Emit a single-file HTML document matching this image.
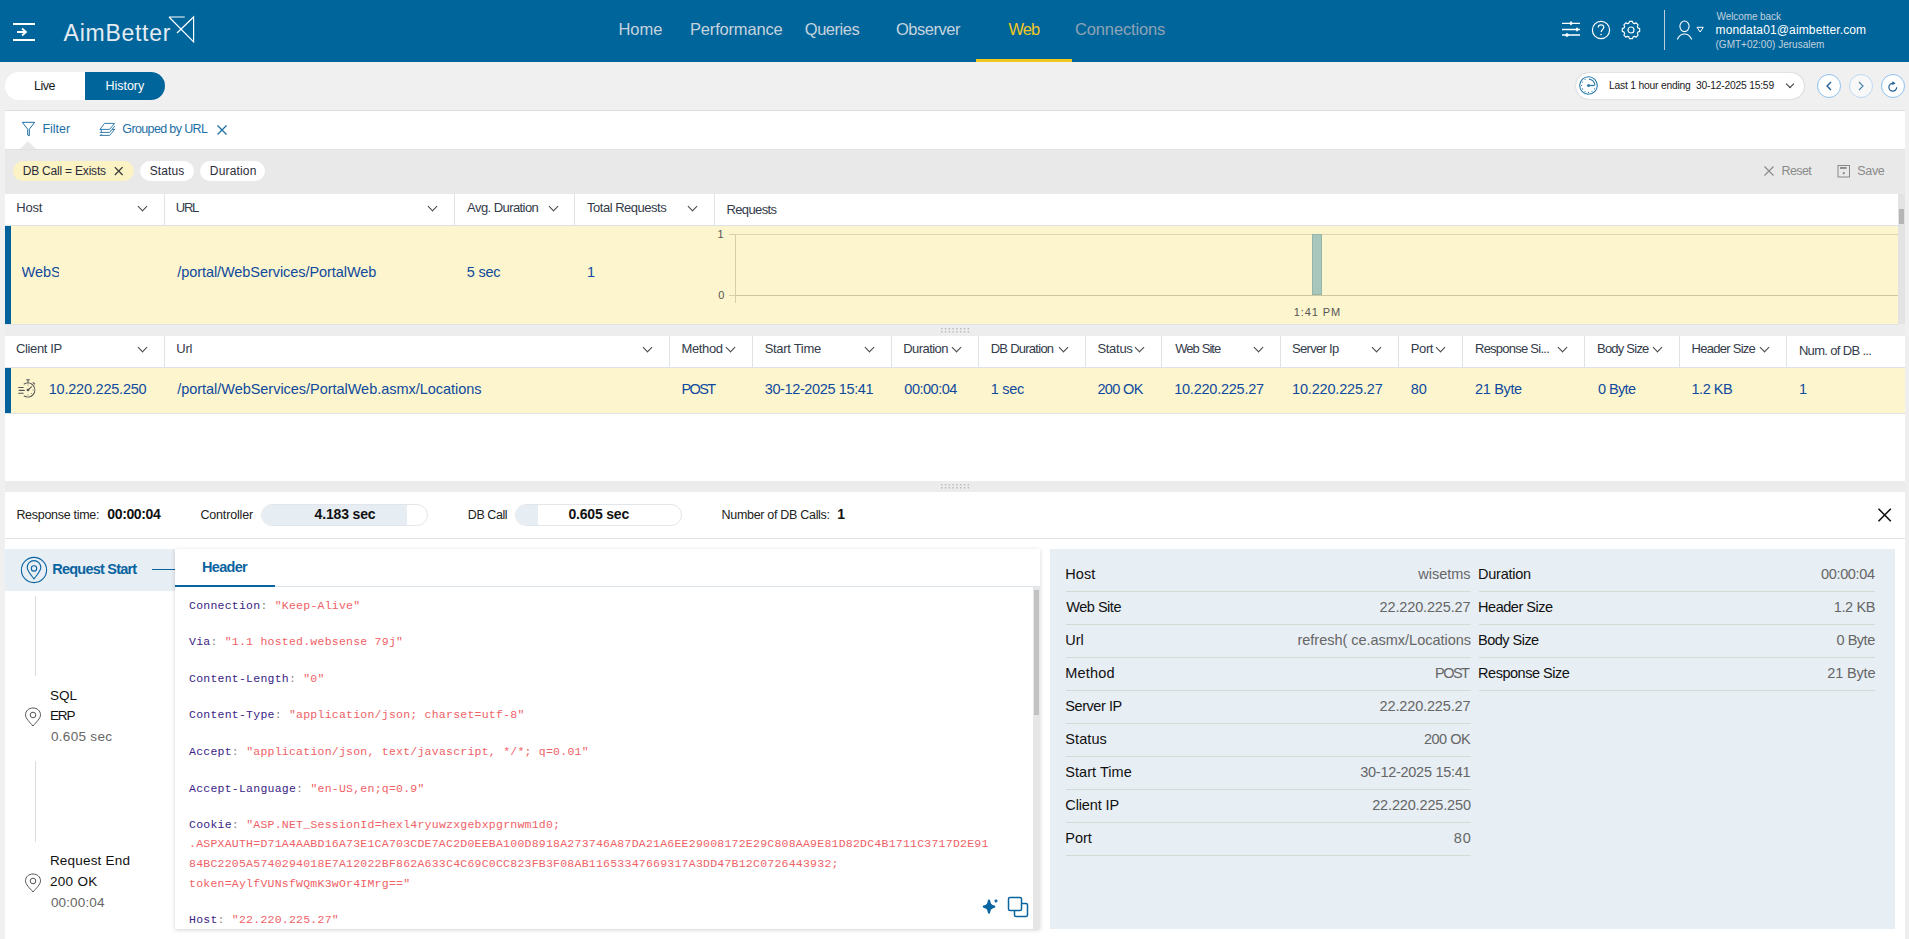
<!DOCTYPE html>
<html><head><meta charset="utf-8">
<style>
*{box-sizing:border-box;margin:0;padding:0}
html,body{width:1909px;height:939px;overflow:hidden}
body{position:relative;background:#f0f0f0;font-family:"Liberation Sans",sans-serif;color:#333}
.a{position:absolute;white-space:pre}
.chev{position:absolute;width:7px;height:7px;border-right:1.3px solid #444;border-bottom:1.3px solid #444;transform:rotate(45deg)}
.vd{position:absolute;width:1px;background:#dfe3e8}
</style></head><body>
<div class="a" style="left:0;top:0;width:1909px;height:62px;background:#00659b"></div>
<div class="a" style="left:13px;top:23px;width:22px;height:2px;background:#fff"></div>
<div class="a" style="left:13px;top:39px;width:22px;height:2px;background:#fff"></div>
<svg class="a" style="left:16px;top:27px" width="12" height="10" viewBox="0 0 12 10"><path d="M1 5H10M6 1.5L10 5L6 8.5" stroke="#fff" stroke-width="1.8" fill="none"/></svg>
<div class="a" style="left:63.60px;top:18.80px;font-family:'Liberation Sans',sans-serif;font-size:23px;color:#e4ecf2;font-weight:normal;line-height:29px;;letter-spacing:0.726px;">AimBetter</div>
<svg class="a" style="left:168px;top:15px" width="28" height="28" viewBox="0 0 28 28"><path d="M1 2H16.8M1 2L25.6 26.8V2L9 18" stroke="#fff" stroke-width="1.2" fill="none"/></svg>
<div class="a" style="left:618.40px;top:19.10px;font-family:'Liberation Sans',sans-serif;font-size:16.5px;color:#c6d3dd;font-weight:normal;line-height:21px;;letter-spacing:0.0px;">Home</div>
<div class="a" style="left:690.00px;top:19.10px;font-family:'Liberation Sans',sans-serif;font-size:16.5px;color:#c6d3dd;font-weight:normal;line-height:21px;;letter-spacing:-0.18px;">Performance</div>
<div class="a" style="left:804.80px;top:19.10px;font-family:'Liberation Sans',sans-serif;font-size:16.5px;color:#c6d3dd;font-weight:normal;line-height:21px;;letter-spacing:-0.467px;">Queries</div>
<div class="a" style="left:895.90px;top:19.10px;font-family:'Liberation Sans',sans-serif;font-size:16.5px;color:#c6d3dd;font-weight:normal;line-height:21px;;letter-spacing:-0.457px;">Observer</div>
<div class="a" style="left:1008.50px;top:19.10px;font-family:'Liberation Sans',sans-serif;font-size:16.5px;color:#f2c81e;font-weight:normal;line-height:21px;;letter-spacing:-1.0px;">Web</div>
<div class="a" style="left:1075.00px;top:19.10px;font-family:'Liberation Sans',sans-serif;font-size:16.5px;color:#8ea3b4;font-weight:normal;line-height:21px;;letter-spacing:-0.14px;">Connections</div>
<div class="a" style="left:976px;top:59px;width:96px;height:3px;background:#f2c81e"></div>
<svg class="a" style="left:1560px;top:18px" width="24" height="22" viewBox="0 0 24 22"><g stroke="#fff" stroke-width="1.3" fill="#fff"><path d="M2 5.3H20M2 11.5H20M2 17H20"/><path d="M11 3.5L12.3 5.3L11 7.1L9.7 5.3Z" stroke-width="0.8"/><path d="M17 9.7L18.3 11.5L17 13.3L15.7 11.5Z" stroke-width="0.8"/><circle cx="7" cy="17" r="1.5" stroke-width="0.6"/></g></svg>
<svg class="a" style="left:1590px;top:19px" width="22" height="22" viewBox="0 0 22 22"><circle cx="11" cy="11" r="8.6" stroke="#fff" stroke-width="1.2" fill="none"/><path d="M8.2 8.6C8.2 6.8 9.5 5.8 11 5.8C12.6 5.8 13.8 6.9 13.8 8.3C13.8 10.2 11.2 10.6 11.2 13" stroke="#fff" stroke-width="1.2" fill="none"/><circle cx="11.1" cy="15.6" r="0.8" fill="#fff"/></svg>
<svg class="a" style="left:1620px;top:19px" width="22" height="22" viewBox="0 0 22 22"><path d="M8.89 4.11L9.62 2.31L12.38 2.31L13.11 4.11L14.38 4.64L16.17 3.88L18.12 5.83L17.36 7.62L17.89 8.89L19.69 9.62L19.69 12.38L17.89 13.11L17.36 14.38L18.12 16.17L16.17 18.12L14.38 17.36L13.11 17.89L12.38 19.69L9.62 19.69L8.89 17.89L7.62 17.36L5.83 18.12L3.88 16.17L4.64 14.38L4.11 13.11L2.31 12.38L2.31 9.62L4.11 8.89L4.64 7.62L3.88 5.83L5.83 3.88L7.62 4.64Z" stroke="#fff" stroke-width="1.15" fill="none" stroke-linejoin="round"/><circle cx="11" cy="11" r="3" stroke="#fff" stroke-width="1.2" fill="none"/></svg>
<div class="a" style="left:1664px;top:10px;width:1px;height:40px;background:#b9cfdd"></div>
<svg class="a" style="left:1675px;top:19px" width="32" height="22" viewBox="0 0 32 22"><ellipse cx="9.5" cy="7.3" rx="4.6" ry="5.3" stroke="#fff" stroke-width="1.1" fill="none"/><path d="M2.3 20.5C4 16.5 6.5 15 9.5 15C12.5 15 15 16.5 16.7 20.5" stroke="#fff" stroke-width="1.1" fill="none"/><path d="M22 8.3H28.3L25.15 13Z" stroke="#fff" stroke-width="1" fill="none"/></svg>
<div class="a" style="left:1716.50px;top:10.55px;font-family:'Liberation Sans',sans-serif;font-size:10px;color:#c2d2de;font-weight:normal;line-height:12px;;letter-spacing:-0.09px;">Welcome back</div>
<div class="a" style="left:1715.50px;top:22.75px;font-family:'Liberation Sans',sans-serif;font-size:12px;color:#ffffff;font-weight:normal;line-height:15px;;letter-spacing:0.137px;">mondata01@aimbetter.com</div>
<div class="a" style="left:1715.50px;top:38.70px;font-family:'Liberation Sans',sans-serif;font-size:10px;color:#c2d2de;font-weight:normal;line-height:12px;;letter-spacing:0.01px;">(GMT+02:00) Jerusalem</div>
<div class="a" style="left:5px;top:72px;width:160px;height:28px;border-radius:14px;background:#fff;overflow:hidden"><div class="a" style="left:80px;top:0;width:80px;height:28px;background:#00659b"></div></div>
<div class="a" style="left:34.00px;top:78.00px;font-family:'Liberation Sans',sans-serif;font-size:12.5px;color:#1a1a1a;font-weight:normal;line-height:16px;;letter-spacing:-0.467px;">Live</div>
<div class="a" style="left:105.50px;top:77.95px;font-family:'Liberation Sans',sans-serif;font-size:12.5px;color:#ffffff;font-weight:normal;line-height:16px;;letter-spacing:-0.033px;">History</div>
<div class="a" style="left:1576px;top:73px;width:228px;height:26px;border-radius:13px;background:#fff;box-shadow:0 0 1.5px #aaa"></div>
<svg class="a" style="left:1578.3px;top:75.3px" width="21" height="21" viewBox="0 0 21 21"><g stroke="#2a7aab" fill="none"><circle cx="10.5" cy="10.5" r="8.8" stroke-width="1.1"/><path d="M10.5 10.5H16.6" stroke-width="1.3"/><path d="M11 4.1A6.4 6.4 0 0 1 16.9 10.3" stroke-width="1.1"/></g><g fill="#2a7aab"><circle cx="10.5" cy="10.5" r="1.5"/><circle cx="7.05" cy="4.52" r="0.6"/><circle cx="4.52" cy="7.05" r="0.6"/><circle cx="3.60" cy="10.50" r="0.6"/><circle cx="4.52" cy="13.95" r="0.6"/><circle cx="7.05" cy="16.48" r="0.6"/><circle cx="10.50" cy="17.40" r="0.6"/><circle cx="13.95" cy="16.48" r="0.6"/><circle cx="16.48" cy="13.95" r="0.6"/></g></svg>
<div class="a" style="left:1609.00px;top:79.45px;font-family:'Liberation Sans',sans-serif;font-size:10.3px;color:#1a1a1a;font-weight:normal;line-height:13px;;letter-spacing:-0.206px;">Last 1 hour ending  30-12-2025 15:59</div>
<div class="chev" style="left:1787px;top:81px;width:6px;height:6px;border-color:#333"></div>
<div class="a" style="left:1817px;top:74px;width:24px;height:24px;border-radius:12px;border:1px solid #8cc0ef;background:#fff"></div>
<div class="a" style="left:1849px;top:74px;width:24px;height:24px;border-radius:12px;border:1px solid #bcd8f3;background:#f8f8f8"></div>
<div class="a" style="left:1881px;top:74px;width:24px;height:24px;border-radius:12px;border:1px solid #8cc0ef;background:#fff"></div>
<svg class="a" style="left:1817px;top:74px" width="88" height="24" viewBox="0 0 88 24"><path d="M14 8L10 12L14 16" stroke="#1f5f95" stroke-width="1.4" fill="none"/><path d="M42 8L46 12L42 16" stroke="#4f86ab" stroke-width="1.2" fill="none"/><path d="M75.8 9.3A3.9 3.9 0 1 0 79.7 13.2" stroke="#1f6095" stroke-width="1.2" fill="none"/><path d="M75.3 7.3L78.6 9.3L75.3 11.3Z" fill="#1f6095"/></svg>
<div class="a" style="left:5px;top:110px;width:1900px;height:1px;background:#dcdcdc"></div>
<div class="a" style="left:5px;top:111px;width:1900px;height:38px;background:#fff"></div>
<svg class="a" style="left:21px;top:121px" width="15" height="16" viewBox="0 0 15 16"><path d="M1.3 1.3H13.7L8.3 8.2V14.8L6.7 14V8.2Z" stroke="#1e6fa5" stroke-width="1" fill="none" stroke-linejoin="round"/></svg>
<div class="a" style="left:42.50px;top:121.25px;font-family:'Liberation Sans',sans-serif;font-size:12.5px;color:#1e6fa5;font-weight:normal;line-height:16px;;letter-spacing:-0.04px;">Filter</div>
<svg class="a" style="left:96px;top:119px" width="24" height="20" viewBox="0 0 24 20"><g stroke="#1e6fa5" stroke-width="0.9" fill="none" stroke-linejoin="round" stroke-linecap="round"><path d="M8.9 4.4H18.5L13.6 10.4H4.3Z"/><path d="M5.3 10.4V13.4M4.3 13.4H13.6L18.5 7.5M16.4 10.4H18.6M4.3 16.4H13.6L18.5 10.6M4.3 16.4L5.5 15.2"/></g></svg>
<div class="a" style="left:122.30px;top:121.45px;font-family:'Liberation Sans',sans-serif;font-size:12.5px;color:#1e6fa5;font-weight:normal;line-height:16px;;letter-spacing:-0.631px;">Grouped by URL</div>
<svg class="a" style="left:216px;top:124px" width="12" height="12" viewBox="0 0 12 12"><path d="M1.5 1.5L10.5 10.5M10.5 1.5L1.5 10.5" stroke="#1e6fa5" stroke-width="1.3"/></svg>
<div class="a" style="left:5px;top:149px;width:1900px;height:45px;background:#e9e9e9"></div>
<div class="a" style="left:5px;top:149px;width:1900px;height:1px;background:#e0e0e0"></div>
<svg class="a" style="left:20px;top:141px" width="16" height="8" viewBox="0 0 16 8"><path d="M0 8L8 0L16 8Z" fill="#e9e9e9"/></svg>
<div class="a" style="left:13px;top:161px;width:121px;height:20px;border-radius:10px;background:#fbf3c3"></div>
<div class="a" style="left:22.70px;top:164.05px;font-family:'Liberation Sans',sans-serif;font-size:12px;color:#2b2b3b;font-weight:normal;line-height:15px;;letter-spacing:-0.2px;">DB Call = Exists</div>
<svg class="a" style="left:113px;top:166px" width="11" height="10" viewBox="0 0 11 10"><path d="M1.8 1.2L9.6 9M9.6 1.2L1.8 9" stroke="#333" stroke-width="1.2"/></svg>
<div class="a" style="left:140px;top:161px;width:54px;height:20px;border-radius:10px;background:#fff"></div>
<div class="a" style="left:149.70px;top:164.05px;font-family:'Liberation Sans',sans-serif;font-size:12px;color:#2b2b3b;font-weight:normal;line-height:15px;;letter-spacing:0.12px;">Status</div>
<div class="a" style="left:200px;top:161px;width:65px;height:20px;border-radius:10px;background:#fff"></div>
<div class="a" style="left:209.80px;top:164.05px;font-family:'Liberation Sans',sans-serif;font-size:12px;color:#2b2b3b;font-weight:normal;line-height:15px;;letter-spacing:0.172px;">Duration</div>
<svg class="a" style="left:1763px;top:165px" width="12" height="12" viewBox="0 0 12 12"><path d="M1.5 1.5L10.5 10.5M10.5 1.5L1.5 10.5" stroke="#888" stroke-width="1.1"/></svg>
<div class="a" style="left:1781.50px;top:163.00px;font-family:'Liberation Sans',sans-serif;font-size:12.5px;color:#8a8a8a;font-weight:normal;line-height:16px;;letter-spacing:-0.6px;">Reset</div>
<svg class="a" style="left:1837px;top:164px" width="14" height="14" viewBox="0 0 14 14"><rect x="1" y="1.5" width="11.5" height="11.5" stroke="#888" stroke-width="1" fill="none"/><rect x="3" y="3" width="6.6" height="1.9" fill="#888"/><circle cx="6.8" cy="9.2" r="1.1" fill="#888"/></svg>
<div class="a" style="left:1857.30px;top:163.00px;font-family:'Liberation Sans',sans-serif;font-size:12.5px;color:#8a8a8a;font-weight:normal;line-height:16px;;letter-spacing:-0.333px;">Save</div>
<div class="a" style="left:5px;top:194px;width:1893px;height:31px;background:#fff"></div>
<div class="a" style="left:5px;top:225px;width:1893px;height:1px;background:#dde2e8"></div>
<div class="a" style="left:1898px;top:194px;width:7px;height:130px;background:#e3e3e3"></div>
<div class="a" style="left:1899px;top:209px;width:5px;height:15px;background:#b5b5b5"></div>
<div class="vd" style="left:164px;top:194px;height:31px"></div>
<div class="vd" style="left:454px;top:194px;height:31px"></div>
<div class="vd" style="left:574px;top:194px;height:31px"></div>
<div class="vd" style="left:714px;top:194px;height:31px"></div>
<div class="a" style="left:16.30px;top:200.10px;font-family:'Liberation Sans',sans-serif;font-size:13px;color:#343b4a;font-weight:normal;line-height:16px;;letter-spacing:-0.2px;">Host</div>
<div class="chev" style="left:139px;top:203px"></div>
<div class="a" style="left:175.80px;top:200.10px;font-family:'Liberation Sans',sans-serif;font-size:13px;color:#343b4a;font-weight:normal;line-height:16px;;letter-spacing:-1.3px;">URL</div>
<div class="chev" style="left:429px;top:203px"></div>
<div class="a" style="left:467.10px;top:200.15px;font-family:'Liberation Sans',sans-serif;font-size:13px;color:#343b4a;font-weight:normal;line-height:16px;;letter-spacing:-0.567px;">Avg. Duration</div>
<div class="chev" style="left:550px;top:203px"></div>
<div class="a" style="left:587.10px;top:200.15px;font-family:'Liberation Sans',sans-serif;font-size:13px;color:#343b4a;font-weight:normal;line-height:16px;;letter-spacing:-0.492px;">Total Requests</div>
<div class="chev" style="left:689px;top:203px"></div>
<div class="a" style="left:726.50px;top:201.75px;font-family:'Liberation Sans',sans-serif;font-size:13px;color:#343b4a;font-weight:normal;line-height:16px;;letter-spacing:-0.628px;">Requests</div>
<div class="a" style="left:5px;top:226px;width:1893px;height:98px;background:#fdf5cd"></div>
<div class="a" style="left:5px;top:226px;width:6px;height:98px;background:#00609a"></div>
<div class="a" style="left:21.50px;top:263.40px;font-family:'Liberation Sans',sans-serif;font-size:14.5px;color:#0f4a9e;font-weight:normal;line-height:18px;;letter-spacing:0.0px;width:37px;overflow:hidden;">WebServices</div>
<div class="a" style="left:177.20px;top:263.40px;font-family:'Liberation Sans',sans-serif;font-size:14.5px;color:#0f4a9e;font-weight:normal;line-height:18px;;letter-spacing:-0.065px;">/portal/WebServices/PortalWeb</div>
<div class="a" style="left:466.70px;top:263.40px;font-family:'Liberation Sans',sans-serif;font-size:14.5px;color:#0f4a9e;font-weight:normal;line-height:18px;;letter-spacing:-0.2px;">5 sec</div>
<div class="a" style="left:586.90px;top:263.40px;font-family:'Liberation Sans',sans-serif;font-size:14.5px;color:#0f4a9e;font-weight:normal;line-height:18px;;letter-spacing:0.0px;">1</div>
<div class="a" style="left:735px;top:234px;width:1163px;height:1px;background:#ddd5b0"></div>
<div class="a" style="left:735px;top:295px;width:1163px;height:1px;background:#cfc7a0"></div>
<div class="a" style="left:735px;top:234px;width:1px;height:69px;background:#d6cfa8"></div>
<div class="a" style="left:729px;top:234px;width:6px;height:1px;background:#d6cfa8"></div>
<div class="a" style="left:729px;top:295px;width:6px;height:1px;background:#d6cfa8"></div>
<div class="a" style="left:717.60px;top:227.00px;font-family:'Liberation Sans',sans-serif;font-size:11px;color:#555;font-weight:normal;line-height:14px;;letter-spacing:0.0px;">1</div>
<div class="a" style="left:718.30px;top:287.75px;font-family:'Liberation Sans',sans-serif;font-size:11px;color:#555;font-weight:normal;line-height:14px;;letter-spacing:0.0px;">0</div>
<div class="a" style="left:1312px;top:234px;width:10px;height:61px;background:#a9c6bd;border:1px solid #93b6aa"></div>
<div class="a" style="left:1293.80px;top:304.90px;font-family:'Liberation Sans',sans-serif;font-size:11px;color:#555;font-weight:normal;line-height:14px;;letter-spacing:0.9px;">1:41 PM</div>
<div class="a" style="left:5px;top:324px;width:1900px;height:12px;background:#ededed"></div>
<div class="a" style="left:5px;top:324px;width:1893px;height:1px;background:#dde2e8"></div>
<svg class="a" style="left:940px;top:327px" width="31" height="7" viewBox="0 0 31 7"><g fill="#bcbcbc"><rect x="1.0" y="1" width="1.5" height="1.5"/><rect x="1.0" y="4" width="1.5" height="1.5"/><rect x="4.8" y="1" width="1.5" height="1.5"/><rect x="4.8" y="4" width="1.5" height="1.5"/><rect x="8.6" y="1" width="1.5" height="1.5"/><rect x="8.6" y="4" width="1.5" height="1.5"/><rect x="12.4" y="1" width="1.5" height="1.5"/><rect x="12.4" y="4" width="1.5" height="1.5"/><rect x="16.2" y="1" width="1.5" height="1.5"/><rect x="16.2" y="4" width="1.5" height="1.5"/><rect x="20.0" y="1" width="1.5" height="1.5"/><rect x="20.0" y="4" width="1.5" height="1.5"/><rect x="23.8" y="1" width="1.5" height="1.5"/><rect x="23.8" y="4" width="1.5" height="1.5"/><rect x="27.6" y="1" width="1.5" height="1.5"/><rect x="27.6" y="4" width="1.5" height="1.5"/></g></svg>
<div class="a" style="left:5px;top:336px;width:1900px;height:145px;background:#fff"></div>
<div class="a" style="left:5px;top:367px;width:1900px;height:1px;background:#dde2e8"></div>
<div class="vd" style="left:164px;top:336px;height:31px"></div>
<div class="vd" style="left:669px;top:336px;height:31px"></div>
<div class="vd" style="left:752px;top:336px;height:31px"></div>
<div class="vd" style="left:891px;top:336px;height:31px"></div>
<div class="vd" style="left:978px;top:336px;height:31px"></div>
<div class="vd" style="left:1085px;top:336px;height:31px"></div>
<div class="vd" style="left:1161px;top:336px;height:31px"></div>
<div class="vd" style="left:1280px;top:336px;height:31px"></div>
<div class="vd" style="left:1398px;top:336px;height:31px"></div>
<div class="vd" style="left:1462px;top:336px;height:31px"></div>
<div class="vd" style="left:1584px;top:336px;height:31px"></div>
<div class="vd" style="left:1679px;top:336px;height:31px"></div>
<div class="vd" style="left:1786px;top:336px;height:31px"></div>
<div class="a" style="left:16.00px;top:341.15px;font-family:'Liberation Sans',sans-serif;font-size:13px;color:#343b4a;font-weight:normal;line-height:16px;;letter-spacing:-0.376px;">Client IP</div>
<div class="chev" style="left:139px;top:344px"></div>
<div class="a" style="left:176.20px;top:341.15px;font-family:'Liberation Sans',sans-serif;font-size:13px;color:#343b4a;font-weight:normal;line-height:16px;;letter-spacing:-0.2px;">Url</div>
<div class="chev" style="left:644px;top:344px"></div>
<div class="a" style="left:681.50px;top:341.15px;font-family:'Liberation Sans',sans-serif;font-size:13px;color:#343b4a;font-weight:normal;line-height:16px;;letter-spacing:-0.36px;">Method</div>
<div class="chev" style="left:727px;top:344px"></div>
<div class="a" style="left:764.70px;top:341.15px;font-family:'Liberation Sans',sans-serif;font-size:13px;color:#343b4a;font-weight:normal;line-height:16px;;letter-spacing:-0.311px;">Start Time</div>
<div class="chev" style="left:866px;top:344px"></div>
<div class="a" style="left:903.30px;top:341.15px;font-family:'Liberation Sans',sans-serif;font-size:13px;color:#343b4a;font-weight:normal;line-height:16px;;letter-spacing:-0.571px;">Duration</div>
<div class="chev" style="left:953px;top:344px"></div>
<div class="a" style="left:990.70px;top:341.15px;font-family:'Liberation Sans',sans-serif;font-size:13px;color:#343b4a;font-weight:normal;line-height:16px;;letter-spacing:-0.74px;">DB Duration</div>
<div class="chev" style="left:1060px;top:344px"></div>
<div class="a" style="left:1097.40px;top:341.15px;font-family:'Liberation Sans',sans-serif;font-size:13px;color:#343b4a;font-weight:normal;line-height:16px;;letter-spacing:-0.28px;">Status</div>
<div class="chev" style="left:1136px;top:344px"></div>
<div class="a" style="left:1175.20px;top:341.15px;font-family:'Liberation Sans',sans-serif;font-size:13px;color:#343b4a;font-weight:normal;line-height:16px;;letter-spacing:-0.915px;">Web Site</div>
<div class="chev" style="left:1255px;top:344px"></div>
<div class="a" style="left:1292.00px;top:341.15px;font-family:'Liberation Sans',sans-serif;font-size:13px;color:#343b4a;font-weight:normal;line-height:16px;;letter-spacing:-0.7px;">Server Ip</div>
<div class="chev" style="left:1373px;top:344px"></div>
<div class="a" style="left:1410.80px;top:341.15px;font-family:'Liberation Sans',sans-serif;font-size:13px;color:#343b4a;font-weight:normal;line-height:16px;;letter-spacing:-0.4px;">Port</div>
<div class="chev" style="left:1437px;top:344px"></div>
<div class="a" style="left:1475.00px;top:341.15px;font-family:'Liberation Sans',sans-serif;font-size:13px;color:#343b4a;font-weight:normal;line-height:16px;;letter-spacing:-0.754px;">Response Si...</div>
<div class="chev" style="left:1559px;top:344px"></div>
<div class="a" style="left:1597.00px;top:341.15px;font-family:'Liberation Sans',sans-serif;font-size:13px;color:#343b4a;font-weight:normal;line-height:16px;;letter-spacing:-0.775px;">Body Size</div>
<div class="chev" style="left:1654px;top:344px"></div>
<div class="a" style="left:1691.50px;top:341.15px;font-family:'Liberation Sans',sans-serif;font-size:13px;color:#343b4a;font-weight:normal;line-height:16px;;letter-spacing:-0.72px;">Header Size</div>
<div class="chev" style="left:1761px;top:344px"></div>
<div class="a" style="left:1798.90px;top:343.15px;font-family:'Liberation Sans',sans-serif;font-size:13px;color:#343b4a;font-weight:normal;line-height:16px;;letter-spacing:-0.661px;">Num. of DB ...</div>
<div class="a" style="left:5px;top:368px;width:1900px;height:45px;background:#fdf5cd"></div>
<div class="a" style="left:5px;top:413px;width:1900px;height:1px;background:#dde2e8"></div>
<div class="a" style="left:5px;top:368px;width:6px;height:45px;background:#00609a"></div>
<svg class="a" style="left:17px;top:378px" width="20" height="20" viewBox="0 0 20 20"><g stroke="#555" stroke-width="1.1" fill="none" stroke-linecap="round"><path d="M7.2 6A7 7 0 1 1 7.2 18"/><path d="M1.6 9.5H6.2M2.2 12.4H7.2M1.6 15.2H6.2M9.6 1.8H12.4M11 2V4.8M16.2 4.6L17.6 6M11 12L14.4 8.8"/></g><circle cx="11" cy="12" r="1.3" fill="#555"/><g fill="#777"><circle cx="11" cy="7" r="0.6"/><circle cx="16" cy="12" r="0.6"/><circle cx="11" cy="17" r="0.6"/><circle cx="14.5" cy="15.5" r="0.5"/></g></svg>
<div class="a" style="left:48.70px;top:379.95px;font-family:'Liberation Sans',sans-serif;font-size:14.5px;color:#0f4a9e;font-weight:normal;line-height:18px;;letter-spacing:-0.216px;">10.220.225.250</div>
<div class="a" style="left:177.20px;top:379.95px;font-family:'Liberation Sans',sans-serif;font-size:14.5px;color:#0f4a9e;font-weight:normal;line-height:18px;;letter-spacing:-0.033px;">/portal/WebServices/PortalWeb.asmx/Locations</div>
<div class="a" style="left:681.50px;top:379.95px;font-family:'Liberation Sans',sans-serif;font-size:14.5px;color:#0f4a9e;font-weight:normal;line-height:18px;;letter-spacing:-1.6px;">POST</div>
<div class="a" style="left:764.70px;top:379.95px;font-family:'Liberation Sans',sans-serif;font-size:14.5px;color:#0f4a9e;font-weight:normal;line-height:18px;;letter-spacing:-0.374px;">30-12-2025 15:41</div>
<div class="a" style="left:904.30px;top:379.95px;font-family:'Liberation Sans',sans-serif;font-size:14.5px;color:#0f4a9e;font-weight:normal;line-height:18px;;letter-spacing:-0.486px;">00:00:04</div>
<div class="a" style="left:990.70px;top:379.95px;font-family:'Liberation Sans',sans-serif;font-size:14.5px;color:#0f4a9e;font-weight:normal;line-height:18px;;letter-spacing:-0.25px;">1 sec</div>
<div class="a" style="left:1097.40px;top:379.95px;font-family:'Liberation Sans',sans-serif;font-size:14.5px;color:#0f4a9e;font-weight:normal;line-height:18px;;letter-spacing:-0.64px;">200 OK</div>
<div class="a" style="left:1174.20px;top:379.95px;font-family:'Liberation Sans',sans-serif;font-size:14.5px;color:#0f4a9e;font-weight:normal;line-height:18px;;letter-spacing:-0.233px;">10.220.225.27</div>
<div class="a" style="left:1292.00px;top:379.95px;font-family:'Liberation Sans',sans-serif;font-size:14.5px;color:#0f4a9e;font-weight:normal;line-height:18px;;letter-spacing:-0.167px;">10.220.225.27</div>
<div class="a" style="left:1410.80px;top:379.95px;font-family:'Liberation Sans',sans-serif;font-size:14.5px;color:#0f4a9e;font-weight:normal;line-height:18px;;letter-spacing:0.0px;">80</div>
<div class="a" style="left:1475.00px;top:379.95px;font-family:'Liberation Sans',sans-serif;font-size:14.5px;color:#0f4a9e;font-weight:normal;line-height:18px;;letter-spacing:-0.334px;">21 Byte</div>
<div class="a" style="left:1598.00px;top:379.95px;font-family:'Liberation Sans',sans-serif;font-size:14.5px;color:#0f4a9e;font-weight:normal;line-height:18px;;letter-spacing:-0.6px;">0 Byte</div>
<div class="a" style="left:1691.50px;top:379.95px;font-family:'Liberation Sans',sans-serif;font-size:14.5px;color:#0f4a9e;font-weight:normal;line-height:18px;;letter-spacing:-0.48px;">1.2 KB</div>
<div class="a" style="left:1798.90px;top:379.95px;font-family:'Liberation Sans',sans-serif;font-size:14.5px;color:#0f4a9e;font-weight:normal;line-height:18px;;letter-spacing:0.0px;">1</div>
<div class="a" style="left:5px;top:481px;width:1900px;height:11px;background:#ececec"></div>
<svg class="a" style="left:940px;top:483px" width="31" height="7" viewBox="0 0 31 7"><g fill="#bcbcbc"><rect x="1.0" y="1" width="1.5" height="1.5"/><rect x="1.0" y="4" width="1.5" height="1.5"/><rect x="4.8" y="1" width="1.5" height="1.5"/><rect x="4.8" y="4" width="1.5" height="1.5"/><rect x="8.6" y="1" width="1.5" height="1.5"/><rect x="8.6" y="4" width="1.5" height="1.5"/><rect x="12.4" y="1" width="1.5" height="1.5"/><rect x="12.4" y="4" width="1.5" height="1.5"/><rect x="16.2" y="1" width="1.5" height="1.5"/><rect x="16.2" y="4" width="1.5" height="1.5"/><rect x="20.0" y="1" width="1.5" height="1.5"/><rect x="20.0" y="4" width="1.5" height="1.5"/><rect x="23.8" y="1" width="1.5" height="1.5"/><rect x="23.8" y="4" width="1.5" height="1.5"/><rect x="27.6" y="1" width="1.5" height="1.5"/><rect x="27.6" y="4" width="1.5" height="1.5"/></g></svg>
<div class="a" style="left:5px;top:492px;width:1900px;height:447px;background:#fff"></div>
<div class="a" style="left:1905px;top:336px;width:4px;height:603px;background:#eeeeee"></div>
<div class="a" style="left:16.40px;top:507.10px;font-family:'Liberation Sans',sans-serif;font-size:12.5px;color:#222;font-weight:normal;line-height:16px;;letter-spacing:-0.293px;">Response time:</div>
<div class="a" style="left:107.30px;top:505.10px;font-family:'Liberation Sans',sans-serif;font-size:14px;color:#111;font-weight:bold;line-height:18px;;letter-spacing:-0.371px;">00:00:04</div>
<div class="a" style="left:200.40px;top:507.10px;font-family:'Liberation Sans',sans-serif;font-size:12.5px;color:#222;font-weight:normal;line-height:16px;;letter-spacing:-0.155px;">Controller</div>
<div class="a" style="left:261px;top:504px;width:167px;height:22px;border-radius:11px;border:1px solid #e2e6ea;background:#fff;overflow:hidden"><div class="a" style="left:0;top:0;width:145px;height:22px;background:#e6edf3"></div></div>
<div class="a" style="left:314.50px;top:505.10px;font-family:'Liberation Sans',sans-serif;font-size:14px;color:#111;font-weight:bold;line-height:18px;;letter-spacing:-0.15px;">4.183 sec</div>
<div class="a" style="left:467.80px;top:507.30px;font-family:'Liberation Sans',sans-serif;font-size:12.5px;color:#222;font-weight:normal;line-height:16px;;letter-spacing:-0.433px;">DB Call</div>
<div class="a" style="left:515px;top:504px;width:167px;height:22px;border-radius:11px;border:1px solid #e2e6ea;background:#fff;overflow:hidden"><div class="a" style="left:0;top:0;width:22px;height:22px;background:#e6edf3"></div></div>
<div class="a" style="left:568.50px;top:505.10px;font-family:'Liberation Sans',sans-serif;font-size:14px;color:#111;font-weight:bold;line-height:18px;;letter-spacing:-0.2px;">0.605 sec</div>
<div class="a" style="left:721.50px;top:507.30px;font-family:'Liberation Sans',sans-serif;font-size:12.5px;color:#222;font-weight:normal;line-height:16px;;letter-spacing:-0.3px;">Number of DB Calls:</div>
<div class="a" style="left:837.20px;top:505.30px;font-family:'Liberation Sans',sans-serif;font-size:14px;color:#111;font-weight:bold;line-height:18px;;letter-spacing:0.0px;">1</div>
<svg class="a" style="left:1876px;top:507px" width="17" height="16" viewBox="0 0 17 16"><path d="M2.5 1.8L14.8 14.2M14.8 1.8L2.5 14.2" stroke="#111" stroke-width="1.6"/></svg>
<div class="a" style="left:5px;top:538px;width:1900px;height:1px;background:#e2e2e2"></div>
<div class="a" style="left:5px;top:549px;width:170px;height:42px;background:#e7eef4"></div>
<svg class="a" style="left:20px;top:556px" width="28" height="28" viewBox="0 0 28 28"><circle cx="14" cy="14" r="12.6" stroke="#0a64a0" stroke-width="1.1" fill="none"/><path d="M14 22.8C11 19 7.2 15.2 7.2 11.6C7.2 7.8 10.2 4.6 14 4.6C17.8 4.6 20.8 7.8 20.8 11.6C20.8 15.2 17 19 14 22.8Z" stroke="#0a64a0" stroke-width="1.1" fill="none"/><circle cx="14" cy="12.4" r="2.7" stroke="#0a64a0" stroke-width="1.1" fill="none"/></svg>
<div class="a" style="left:52.30px;top:559.95px;font-family:'Liberation Sans',sans-serif;font-size:14.5px;color:#0a64a0;font-weight:bold;line-height:18px;;letter-spacing:-0.783px;">Request Start</div>
<div class="a" style="left:152px;top:569px;width:23px;height:1px;background:#0a64a0"></div>
<div class="a" style="left:35px;top:596px;width:1px;height:80px;background:#dcdcdc"></div>
<div class="a" style="left:35px;top:761px;width:1px;height:81px;background:#dcdcdc"></div>
<svg class="a" style="left:24px;top:707px" width="18" height="20" viewBox="0 0 18 20"><path d="M9 19C6 15.5 1.5 11.5 1.5 7.8C1.5 3.8 4.8 1 9 1C13.2 1 16.5 3.8 16.5 7.8C16.5 11.5 12 15.5 9 19Z" stroke="#555" stroke-width="1" fill="none"/><circle cx="9" cy="8" r="2.8" stroke="#555" stroke-width="1" fill="none"/></svg>
<svg class="a" style="left:24px;top:873px" width="18" height="20" viewBox="0 0 18 20"><path d="M9 19C6 15.5 1.5 11.5 1.5 7.8C1.5 3.8 4.8 1 9 1C13.2 1 16.5 3.8 16.5 7.8C16.5 11.5 12 15.5 9 19Z" stroke="#555" stroke-width="1" fill="none"/><circle cx="9" cy="8" r="2.8" stroke="#555" stroke-width="1" fill="none"/></svg>
<div class="a" style="left:49.90px;top:687.05px;font-family:'Liberation Sans',sans-serif;font-size:13.5px;color:#111;font-weight:normal;line-height:17px;;letter-spacing:0.1px;">SQL</div>
<div class="a" style="left:49.90px;top:707.25px;font-family:'Liberation Sans',sans-serif;font-size:13.5px;color:#111;font-weight:normal;line-height:17px;;letter-spacing:-1.1px;">ERP</div>
<div class="a" style="left:50.90px;top:727.90px;font-family:'Liberation Sans',sans-serif;font-size:13.5px;color:#666;font-weight:normal;line-height:17px;;letter-spacing:0.325px;">0.605 sec</div>
<div class="a" style="left:49.90px;top:852.45px;font-family:'Liberation Sans',sans-serif;font-size:13.5px;color:#111;font-weight:normal;line-height:17px;;letter-spacing:0.2px;">Request End</div>
<div class="a" style="left:49.90px;top:873.20px;font-family:'Liberation Sans',sans-serif;font-size:13.5px;color:#111;font-weight:normal;line-height:17px;;letter-spacing:0.32px;">200 OK</div>
<div class="a" style="left:50.90px;top:893.85px;font-family:'Liberation Sans',sans-serif;font-size:13.5px;color:#666;font-weight:normal;line-height:17px;;letter-spacing:0.143px;">00:00:04</div>
<div class="a" style="left:175px;top:549px;width:865px;height:380px;background:#fff;box-shadow:0 1px 4px rgba(0,0,0,0.18)"></div>
<div class="a" style="left:175px;top:586px;width:865px;height:1px;background:#dde3ea"></div>
<div class="a" style="left:175px;top:585px;width:100px;height:2px;background:#0a64a0"></div>
<div class="a" style="left:202.00px;top:557.80px;font-family:'Liberation Sans',sans-serif;font-size:14.5px;color:#0a64a0;font-weight:bold;line-height:18px;;letter-spacing:-0.68px;">Header</div>
<div class="a" style="left:1033px;top:587px;width:7px;height:342px;background:#e6e6e6"></div>
<div class="a" style="left:1034px;top:590px;width:5px;height:125px;background:#c2c2c2"></div>
<div class="a" style="left:189px;top:599.4px;font-family:&quot;Liberation Mono&quot;,monospace;font-size:11.5px;line-height:14px;letter-spacing:0.238px"><span style="color:#3a2386">Connection</span><span style="color:#888">: </span><span style="color:#ef6166">&quot;Keep-Alive&quot;</span></div>
<div class="a" style="left:189px;top:635.2px;font-family:&quot;Liberation Mono&quot;,monospace;font-size:11.5px;line-height:14px;letter-spacing:0.238px"><span style="color:#3a2386">Via</span><span style="color:#888">: </span><span style="color:#ef6166">&quot;1.1 hosted.websense 79j&quot;</span></div>
<div class="a" style="left:189px;top:671.7px;font-family:&quot;Liberation Mono&quot;,monospace;font-size:11.5px;line-height:14px;letter-spacing:0.238px"><span style="color:#3a2386">Content-Length</span><span style="color:#888">: </span><span style="color:#ef6166">&quot;0&quot;</span></div>
<div class="a" style="left:189px;top:708.3px;font-family:&quot;Liberation Mono&quot;,monospace;font-size:11.5px;line-height:14px;letter-spacing:0.238px"><span style="color:#3a2386">Content-Type</span><span style="color:#888">: </span><span style="color:#ef6166">&quot;application/json; charset=utf-8&quot;</span></div>
<div class="a" style="left:189px;top:744.9px;font-family:&quot;Liberation Mono&quot;,monospace;font-size:11.5px;line-height:14px;letter-spacing:0.238px"><span style="color:#3a2386">Accept</span><span style="color:#888">: </span><span style="color:#ef6166">&quot;application/json, text/javascript, */*; q=0.01&quot;</span></div>
<div class="a" style="left:189px;top:781.6px;font-family:&quot;Liberation Mono&quot;,monospace;font-size:11.5px;line-height:14px;letter-spacing:0.238px"><span style="color:#3a2386">Accept-Language</span><span style="color:#888">: </span><span style="color:#ef6166">&quot;en-US,en;q=0.9&quot;</span></div>
<div class="a" style="left:189px;top:817.9px;font-family:&quot;Liberation Mono&quot;,monospace;font-size:11.5px;line-height:14px;letter-spacing:0.238px"><span style="color:#3a2386">Cookie</span><span style="color:#888">: </span><span style="color:#ef6166">&quot;ASP.NET_SessionId=hexl4ryuwzxgebxpgrnwm1d0;</span></div>
<div class="a" style="left:189px;top:913.3px;font-family:&quot;Liberation Mono&quot;,monospace;font-size:11.5px;line-height:14px;letter-spacing:0.238px"><span style="color:#3a2386">Host</span><span style="color:#888">: </span><span style="color:#ef6166">&quot;22.220.225.27&quot;</span></div>
<div class="a" style="left:189px;top:837.4px;font-family:&quot;Liberation Mono&quot;,monospace;font-size:11.5px;line-height:14px;letter-spacing:0.238px;color:#ef6166">.ASPXAUTH=D71A4AABD16A73E1CA703CDE7AC2D0EEBA100D8918A273746A87DA21A6EE29008172E29C808AA9E81D82DC4B1711C3717D2E91</div>
<div class="a" style="left:189px;top:857.0px;font-family:&quot;Liberation Mono&quot;,monospace;font-size:11.5px;line-height:14px;letter-spacing:0.238px;color:#ef6166">84BC2205A5740294018E7A12022BF862A633C4C69C0CC823FB3F08AB11653347669317A3DD47B12C0726443932;</div>
<div class="a" style="left:189px;top:876.5px;font-family:&quot;Liberation Mono&quot;,monospace;font-size:11.5px;line-height:14px;letter-spacing:0.238px;color:#ef6166">token=AylfVUNsfWQmK3wOr4IMrg==&quot;</div>
<svg class="a" style="left:980px;top:897px" width="20" height="20" viewBox="0 0 20 20"><path d="M9 3.6C9.7 7.2 10.6 8.6 14.2 9.6C10.6 10.6 9.7 12 9 15.6C8.3 12 7.4 10.6 3.8 9.6C7.4 8.6 8.3 7.2 9 3.6Z" fill="#0a64a0" stroke="#0a64a0" stroke-width="2.2" stroke-linejoin="round"/><path d="M16 2.6L17.4 4L16 5.4L14.6 4Z" fill="#0a64a0" stroke="#0a64a0" stroke-width="0.9" stroke-linejoin="round"/></svg>
<svg class="a" style="left:1007px;top:896px" width="22" height="22" viewBox="0 0 22 22"><rect x="1.5" y="1.5" width="13" height="13" rx="1.5" stroke="#0a64a0" stroke-width="1.5" fill="#fff"/><path d="M14.5 7.5H19A1.5 1.5 0 0 1 20.5 9V19A1.5 1.5 0 0 1 19 20.5H9A1.5 1.5 0 0 1 7.5 19V14.5" stroke="#0a64a0" stroke-width="1.5" fill="none"/></svg>
<div class="a" style="left:1050px;top:549px;width:845px;height:380px;background:#e7eef4"></div>
<div class="a" style="left:1065.30px;top:565.05px;font-family:'Liberation Sans',sans-serif;font-size:14.5px;color:#111;font-weight:normal;line-height:18px;;letter-spacing:0.067px;">Host</div>
<div class="a" style="left:1418.30px;top:565.05px;font-family:'Liberation Sans',sans-serif;font-size:14.5px;color:#666;font-weight:normal;line-height:18px;;letter-spacing:-0.034px;">wisetms</div>
<div class="a" style="left:1066px;top:591px;width:405px;height:1px;background:#d7d9d6"></div>
<div class="a" style="left:1066.30px;top:598.05px;font-family:'Liberation Sans',sans-serif;font-size:14.5px;color:#111;font-weight:normal;line-height:18px;;letter-spacing:-0.486px;">Web Site</div>
<div class="a" style="left:1379.60px;top:598.05px;font-family:'Liberation Sans',sans-serif;font-size:14.5px;color:#666;font-weight:normal;line-height:18px;;letter-spacing:-0.15px;">22.220.225.27</div>
<div class="a" style="left:1066px;top:624px;width:405px;height:1px;background:#d7d9d6"></div>
<div class="a" style="left:1065.30px;top:631.05px;font-family:'Liberation Sans',sans-serif;font-size:14.5px;color:#111;font-weight:normal;line-height:18px;;letter-spacing:-0.1px;">Url</div>
<div class="a" style="left:1297.50px;top:631.05px;font-family:'Liberation Sans',sans-serif;font-size:14.5px;color:#666;font-weight:normal;line-height:18px;;letter-spacing:-0.024px;">refresh( ce.asmx/Locations</div>
<div class="a" style="left:1066px;top:657px;width:405px;height:1px;background:#d7d9d6"></div>
<div class="a" style="left:1065.30px;top:664.05px;font-family:'Liberation Sans',sans-serif;font-size:14.5px;color:#111;font-weight:normal;line-height:18px;;letter-spacing:0.16px;">Method</div>
<div class="a" style="left:1435.00px;top:664.05px;font-family:'Liberation Sans',sans-serif;font-size:14.5px;color:#666;font-weight:normal;line-height:18px;;letter-spacing:-1.534px;">POST</div>
<div class="a" style="left:1066px;top:690px;width:405px;height:1px;background:#d7d9d6"></div>
<div class="a" style="left:1065.30px;top:697.05px;font-family:'Liberation Sans',sans-serif;font-size:14.5px;color:#111;font-weight:normal;line-height:18px;;letter-spacing:-0.449px;">Server IP</div>
<div class="a" style="left:1379.60px;top:697.05px;font-family:'Liberation Sans',sans-serif;font-size:14.5px;color:#666;font-weight:normal;line-height:18px;;letter-spacing:-0.15px;">22.220.225.27</div>
<div class="a" style="left:1066px;top:723px;width:405px;height:1px;background:#d7d9d6"></div>
<div class="a" style="left:1065.30px;top:730.05px;font-family:'Liberation Sans',sans-serif;font-size:14.5px;color:#111;font-weight:normal;line-height:18px;;letter-spacing:0.08px;">Status</div>
<div class="a" style="left:1424.00px;top:730.05px;font-family:'Liberation Sans',sans-serif;font-size:14.5px;color:#666;font-weight:normal;line-height:18px;;letter-spacing:-0.52px;">200 OK</div>
<div class="a" style="left:1066px;top:756px;width:405px;height:1px;background:#d7d9d6"></div>
<div class="a" style="left:1065.30px;top:763.05px;font-family:'Liberation Sans',sans-serif;font-size:14.5px;color:#111;font-weight:normal;line-height:18px;;letter-spacing:0.045px;">Start Time</div>
<div class="a" style="left:1360.30px;top:763.05px;font-family:'Liberation Sans',sans-serif;font-size:14.5px;color:#666;font-weight:normal;line-height:18px;;letter-spacing:-0.28px;">30-12-2025 15:41</div>
<div class="a" style="left:1066px;top:789px;width:405px;height:1px;background:#d7d9d6"></div>
<div class="a" style="left:1065.30px;top:796.05px;font-family:'Liberation Sans',sans-serif;font-size:14.5px;color:#111;font-weight:normal;line-height:18px;;letter-spacing:-0.125px;">Client IP</div>
<div class="a" style="left:1372.20px;top:796.05px;font-family:'Liberation Sans',sans-serif;font-size:14.5px;color:#666;font-weight:normal;line-height:18px;;letter-spacing:-0.154px;">22.220.225.250</div>
<div class="a" style="left:1066px;top:822px;width:405px;height:1px;background:#d7d9d6"></div>
<div class="a" style="left:1065.30px;top:829.05px;font-family:'Liberation Sans',sans-serif;font-size:14.5px;color:#111;font-weight:normal;line-height:18px;;letter-spacing:0.0px;">Port</div>
<div class="a" style="left:1453.70px;top:829.05px;font-family:'Liberation Sans',sans-serif;font-size:14.5px;color:#666;font-weight:normal;line-height:18px;;letter-spacing:1.0px;">80</div>
<div class="a" style="left:1066px;top:855px;width:405px;height:1px;background:#d7d9d6"></div>
<div class="a" style="left:1478.10px;top:565.05px;font-family:'Liberation Sans',sans-serif;font-size:14.5px;color:#111;font-weight:normal;line-height:18px;;letter-spacing:-0.257px;">Duration</div>
<div class="a" style="left:1821.00px;top:565.05px;font-family:'Liberation Sans',sans-serif;font-size:14.5px;color:#666;font-weight:normal;line-height:18px;;letter-spacing:-0.343px;">00:00:04</div>
<div class="a" style="left:1479px;top:591px;width:396px;height:1px;background:#d7d9d6"></div>
<div class="a" style="left:1478.10px;top:598.05px;font-family:'Liberation Sans',sans-serif;font-size:14.5px;color:#111;font-weight:normal;line-height:18px;;letter-spacing:-0.48px;">Header Size</div>
<div class="a" style="left:1833.70px;top:598.05px;font-family:'Liberation Sans',sans-serif;font-size:14.5px;color:#666;font-weight:normal;line-height:18px;;letter-spacing:-0.36px;">1.2 KB</div>
<div class="a" style="left:1479px;top:624px;width:396px;height:1px;background:#d7d9d6"></div>
<div class="a" style="left:1478.10px;top:631.05px;font-family:'Liberation Sans',sans-serif;font-size:14.5px;color:#111;font-weight:normal;line-height:18px;;letter-spacing:-0.524px;">Body Size</div>
<div class="a" style="left:1836.50px;top:631.05px;font-family:'Liberation Sans',sans-serif;font-size:14.5px;color:#666;font-weight:normal;line-height:18px;;letter-spacing:-0.48px;">0 Byte</div>
<div class="a" style="left:1479px;top:657px;width:396px;height:1px;background:#d7d9d6"></div>
<div class="a" style="left:1478.10px;top:664.05px;font-family:'Liberation Sans',sans-serif;font-size:14.5px;color:#111;font-weight:normal;line-height:18px;;letter-spacing:-0.484px;">Response Size</div>
<div class="a" style="left:1827.30px;top:664.05px;font-family:'Liberation Sans',sans-serif;font-size:14.5px;color:#666;font-weight:normal;line-height:18px;;letter-spacing:-0.167px;">21 Byte</div>
<div class="a" style="left:1479px;top:690px;width:396px;height:1px;background:#d7d9d6"></div>
</body></html>
